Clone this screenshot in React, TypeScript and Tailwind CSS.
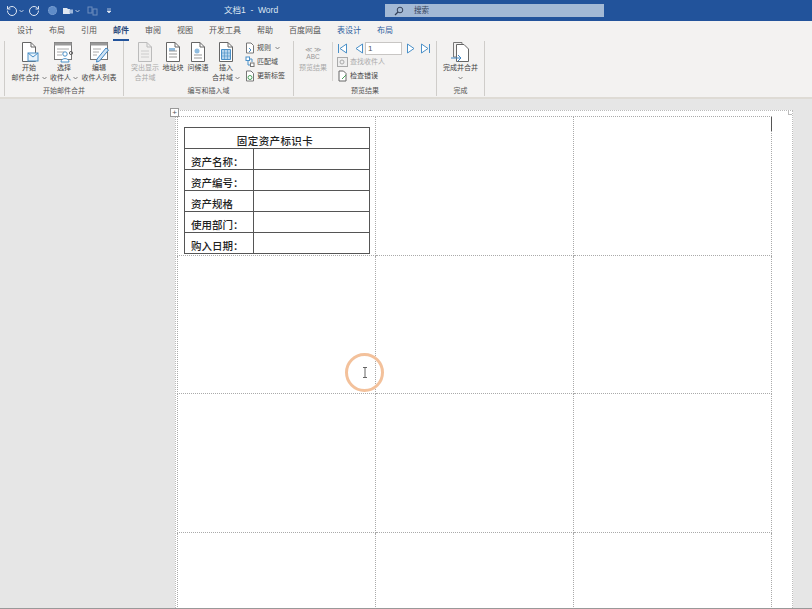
import React from "react";
import { RotateCcw, RotateCw } from "lucide-react";

const FONT = "font-['Liberation_Sans','Noto_Sans_CJK_SC',sans-serif]";

function Chevron({ className = "", color = "#666" }: { className?: string; color?: string }) {
  return (
    <svg width="5" height="4" viewBox="0 0 5 4" className={className}>
      <path d="M0.5 1 L2.5 3 L4.5 1" fill="none" stroke={color} strokeWidth="0.8" />
    </svg>
  );
}

// folded page used by most ribbon buttons
function Doc({
  stroke = "#666",
  fill = "#fff",
  children,
}: {
  stroke?: string;
  fill?: string;
  children?: React.ReactNode;
}) {
  return (
    <svg width="20" height="21" viewBox="0 0 20 21">
      <path d="M3.5 0.5 H12 L16.5 5 V19.5 H3.5 Z" fill={fill} stroke={stroke} />
      <path d="M12 0.5 V5 H16.5" fill="none" stroke={stroke} />
      {children}
    </svg>
  );
}

function BigButton({
  width,
  icon,
  lines,
  disabled,
}: {
  width: string;
  icon: React.ReactNode;
  lines: React.ReactNode[];
  disabled?: boolean;
}) {
  return (
    <div className={`flex flex-col items-center ${width} ${disabled ? "text-[#aaa]" : "text-[#444]"}`}>
      <div className="h-[21px] flex items-end justify-center">{icon}</div>
      {lines.map((line, i) => (
        <div key={i} className="h-[10px] leading-[10px] text-[7px] whitespace-nowrap flex items-center gap-[1px]">
          {line}
        </div>
      ))}
    </div>
  );
}

function Group({ width, label, children }: { width: string; label: string; children: React.ReactNode }) {
  return (
    <div className={`${width} h-[55px] border-r border-[#cfcdca] flex flex-col shrink-0`}>
      <div className="flex-1 flex items-start">{children}</div>
      <div className="h-[10px] leading-[10px] text-[7px] text-center text-[#555]">{label}</div>
    </div>
  );
}

function SmallRow({ icon, text, disabled }: { icon: React.ReactNode; text: React.ReactNode; disabled?: boolean }) {
  return (
    <div className={`h-[14px] flex items-center gap-[2px] text-[7px] whitespace-nowrap ${disabled ? "text-[#aaa]" : "text-[#444]"}`}>
      {icon}
      {text}
    </div>
  );
}

const lineDoc = <path d="M6 9 H14 M6 12 H14 M6 15 H14" stroke="#999" />;

function NavArrow({ dir, bar }: { dir: "l" | "r"; bar?: boolean }) {
  return (
    <svg width="11" height="11" viewBox="0 0 11 11">
      {dir === "l" ? (
        <>
          <path d="M9.5 1 L3 5.5 L9.5 10 Z" fill="#fff" stroke="#4a90c8" />
          {bar && <path d="M1.5 1 V10" stroke="#4a90c8" />}
        </>
      ) : (
        <>
          <path d="M1.5 1 L8 5.5 L1.5 10 Z" fill="#fff" stroke="#4a90c8" />
          {bar && <path d="M9.5 1 V10" stroke="#4a90c8" />}
        </>
      )}
    </svg>
  );
}

const TABS = ["设计", "布局", "引用", "邮件", "审阅", "视图", "开发工具", "帮助", "百度网盘", "表设计", "布局"];

function TitleBar() {
  return (
    <div className="h-[21px] bg-[#22539b] flex items-center text-[#dfe7f2] relative">
      <div className="w-[200px] pl-[6px] flex items-center shrink-0">
        <RotateCcw size={12} strokeWidth={2} />
        <Chevron className="ml-[1px]" color="#dfe7f2" />
        <RotateCw size={12} strokeWidth={2} className="ml-[4px]" />
        <span className="ml-[8px] w-[9px] h-[9px] rounded-full bg-[#5f8cc8] border border-dotted border-[#86a7d6]" />
        <svg width="12" height="9" viewBox="0 0 12 9" className="ml-[5px]">
          <path d="M1 2 H5 L6 3 H8 V8 H1 Z" fill="#dfe7f2" />
          <rect x="7.5" y="3.5" width="3.5" height="4" fill="#9db6da" />
        </svg>
        <Chevron className="ml-[1px]" color="#dfe7f2" />
        <svg width="11" height="10" viewBox="0 0 11 10" className="ml-[7px] opacity-40">
          <rect x="1" y="1" width="4" height="6" fill="none" stroke="#dfe7f2" />
          <rect x="6" y="3" width="4" height="6" fill="none" stroke="#dfe7f2" />
        </svg>
        <svg width="6" height="6" viewBox="0 0 6 6" className="ml-[8px]">
          <path d="M1 1 H5 M1 3 L3 5 L5 3 Z" fill="#dfe7f2" stroke="#dfe7f2" strokeWidth="0.7" />
        </svg>
      </div>
      <div className="w-[185px] shrink-0 pl-[24px] text-[8.5px] whitespace-pre">文档1  -  Word</div>
      <div className="w-[219px] h-[13px] bg-[#a3b9d5] flex items-center pl-[9px] gap-[10px] text-[#33415a] text-[7.5px]">
        <svg width="10" height="10" viewBox="0 0 10 10">
          <circle cx="6" cy="4" r="2.8" fill="none" stroke="#33415a" />
          <path d="M4 6 L1 9" stroke="#33415a" strokeWidth="1.2" />
        </svg>
        搜索
      </div>
    </div>
  );
}

function Tabs() {
  return (
    <div className="h-[20px] bg-[#f3f2f1] flex items-center pl-[17px] gap-[16px] text-[8px] text-[#555]">
      {TABS.map((t, i) => (
        <div
          key={i}
          className={`relative leading-[20px] h-[20px] ${i === 3 ? "font-bold text-[#2b4a7c] border-b-2 border-[#22539b]" : ""} ${i >= 9 ? "text-[#2f5f9f]" : ""}`}
        >
          {t}
        </div>
      ))}
    </div>
  );
}

function Ribbon() {
  return (
    <div className="h-[58px] bg-[#f3f2f1] flex items-start pl-[4px] border-b-[2px] border-[#dedbd5]">
      <div className="w-px h-[55px] bg-[#cfcdca]" />
      <Group width="w-[119px]" label="开始邮件合并">
        <div className="flex pl-[4px] pt-[1px]">
          <BigButton
            width="w-[40px]"
            icon={
              <Doc>
                <rect x="9" y="11" width="10" height="8" fill="#e8f2fa" stroke="#4a90c8" />
                <path d="M9 11 L14 15 L19 11" fill="none" stroke="#4a90c8" />
              </Doc>
            }
            lines={["开始", <>邮件合并<Chevron className="ml-[1px]" /></>]}
          />
          <BigButton
            width="w-[30px]"
            icon={
              <svg width="22" height="21" viewBox="0 0 22 21">
                <rect x="1.5" y="0.5" width="17" height="17" fill="#fff" stroke="#777" />
                <rect x="1.5" y="0.5" width="17" height="3" fill="#999" />
                <path d="M4 7 H16 M4 10 H11 M4 13 H9" stroke="#aaa" />
                <circle cx="12" cy="12" r="2.2" fill="#fff" stroke="#4a90c8" />
                <path d="M8 20 C8 15.5 16 15.5 16 20 Z" fill="#fff" stroke="#4a90c8" />
                <circle cx="18" cy="11" r="1.6" fill="none" stroke="#666" />
              </svg>
            }
            lines={["选择", <>收件人<Chevron className="ml-[1px]" /></>]}
          />
          <BigButton
            width="w-[40px]"
            icon={
              <svg width="22" height="21" viewBox="0 0 22 21">
                <rect x="2.5" y="0.5" width="17" height="17" fill="#fff" stroke="#777" />
                <rect x="2.5" y="0.5" width="17" height="3" fill="#999" />
                <path d="M5 7 H13 M5 10 H11 M5 13 H9" stroke="#aaa" />
                <path d="M9 17 L18 6 L20.5 8 L11.5 19 L8.5 20 Z" fill="#cfe3f4" stroke="#3f86c4" />
              </svg>
            }
            lines={["编辑", "收件人列表"]}
          />
        </div>
      </Group>
      <Group width="w-[170px]" label="编写和插入域">
        <div className="flex pl-[3px] pt-[1px]">
          <BigButton
            width="w-[36px]"
            disabled
            icon={<Doc stroke="#bbb" fill="#f0efee"><path d="M6 9 H14 M6 12 H14 M6 15 H14" stroke="#ccc" /></Doc>}
            lines={["突出显示", "合并域"]}
          />
          <BigButton
            width="w-[20px]"
            icon={<Doc><rect x="6" y="6" width="6" height="3" fill="#8fbce0" />{lineDoc}</Doc>}
            lines={["地址块"]}
          />
          <BigButton
            width="w-[30px]"
            icon={<Doc><circle cx="9" cy="9" r="2.5" fill="#8fbce0" /><path d="M6 13 H14 M6 16 H14" stroke="#999" /></Doc>}
            lines={["问候语"]}
          />
          <BigButton
            width="w-[26px]"
            icon={
              <Doc>
                <path d="M5.5 7.5 H14.5 V17.5 H5.5 Z" fill="#b4d3ec" stroke="#4a90c8" />
                <path d="M8.5 7.5 V17.5 M11.5 7.5 V17.5 M5.5 11 H14.5 M5.5 14 H14.5" stroke="#4a90c8" strokeWidth="0.6" />
              </Doc>
            }
            lines={["插入", <>合并域<Chevron className="ml-[1px]" /></>]}
          />
          <div className="flex flex-col ml-[6px] -mt-[1px]">
            <SmallRow
              icon={<svg width="10" height="12" viewBox="0 0 10 12"><path d="M1.5 1 H6 L8.5 3.5 V11 H1.5 Z" fill="#fff" stroke="#777" /><path d="M4 6 L6 8 L4 10" fill="none" stroke="#4a90c8" /></svg>}
              text={<>规则<Chevron className="ml-[2px]" /></>}
            />
            <SmallRow
              icon={<svg width="10" height="12" viewBox="0 0 10 12"><rect x="1" y="1" width="3.5" height="3.5" fill="#fff" stroke="#4a90c8" /><rect x="5.5" y="7" width="3.5" height="3.5" fill="#fff" stroke="#777" /><path d="M3 5 V9 H5 M7 6 V3 H5" fill="none" stroke="#4a90c8" /></svg>}
              text="匹配域"
            />
            <SmallRow
              icon={<svg width="10" height="12" viewBox="0 0 10 12"><path d="M1.5 1 H6 L8.5 3.5 V11 H1.5 Z" fill="#fff" stroke="#777" /><circle cx="5" cy="7.5" r="2" fill="none" stroke="#4aa35c" /></svg>}
              text="更新标签"
            />
          </div>
        </div>
      </Group>
      <Group width="w-[143px]" label="预览结果">
        <div className="flex pt-[1px]">
          <div className="w-[39px] h-[39px] border-r border-[#d6d4d1] mr-[4px]">
            <BigButton
              width="w-[38px]"
              disabled
              icon={
                <div className="text-[6.5px] leading-[7px] text-center text-[#999] font-['Liberation_Sans',sans-serif]">
                  <div>≪ ≫</div>
                  <div className="mb-[3px]">ABC</div>
                </div>
              }
              lines={["预览结果"]}
            />
          </div>
          <div className="flex flex-col -mt-[1px]">
            <div className="h-[14px] flex items-center">
              <NavArrow dir="l" bar />
              <span className="w-[5px]" />
              <NavArrow dir="l" />
              <div className="w-[37px] h-[13px] ml-[1px] mr-[4px] bg-white border border-[#c8c6c4] pl-[2px] text-[8px] leading-[11px] text-[#555]">1</div>
              <NavArrow dir="r" />
              <span className="w-[3px]" />
              <NavArrow dir="r" bar />
            </div>
            <SmallRow
              disabled
              icon={<svg width="11" height="10" viewBox="0 0 11 10"><rect x="0.5" y="0.5" width="10" height="9" fill="#eee" stroke="#aaa" /><circle cx="5" cy="5" r="2" fill="none" stroke="#aaa" /></svg>}
              text="查找收件人"
            />
            <SmallRow
              icon={<svg width="11" height="12" viewBox="0 0 11 12"><path d="M2 1 H6.5 L9 3.5 V11 H2 Z" fill="#fff" stroke="#666" /><path d="M5 9 L9 5" stroke="#4aa35c" /></svg>}
              text="检查错误"
            />
          </div>
        </div>
      </Group>
      <Group width="w-[48px]" label="完成">
        <div className="w-full pt-[1px]">
          <BigButton
            width="w-full"
            icon={
              <svg width="22" height="21" viewBox="0 0 22 21">
                <path d="M3.5 0.5 H12 V15 H3.5 Z" fill="#f3f2f1" stroke="#777" />
                <path d="M6.5 2.5 H14 L18.5 7 V19.5 H6.5 Z" fill="#fff" stroke="#666" />
                <path d="M1 16 H11 M8 13 L11 16 L8 19" fill="none" stroke="#3f86c4" />
              </svg>
            }
            lines={["完成并合并", <Chevron />]}
          />
        </div>
      </Group>
    </div>
  );
}

const CARD_ROWS = ["资产名称：", "资产编号：", "资产规格", "使用部门：", "购入日期："];

function AssetCard() {
  return (
    <table className="ml-[6px] mt-[10px] w-[186px] table-fixed border-collapse text-[10.5px] text-[#222] font-medium">
      <colgroup>
        <col className="w-[69px]" />
        <col />
      </colgroup>
      <tbody>
        <tr className="h-[21px]">
          <td colSpan={2} className="border border-[#555] text-center align-bottom leading-[14px] tracking-[0.4px] pr-[4px]">
            固定资产标识卡
          </td>
        </tr>
        {CARD_ROWS.map((row) => (
          <tr key={row} className="h-[21px]">
            <td className="border border-[#555] pl-[6px] align-bottom leading-[14px] whitespace-nowrap">{row}</td>
            <td className="border border-[#555]" />
          </tr>
        ))}
      </tbody>
    </table>
  );
}

function Page() {
  const cells = Array.from({ length: 12 });
  return (
    <div className="relative ml-[175px] w-[618px] h-[560px] bg-white border-l border-t border-r border-dotted border-[#bbb] pl-[1px] pt-[5px]">
      {/* table move handle */}
      <div className="absolute -left-[6px] -top-[3px] w-[9px] h-[9px] bg-white border border-[#999] flex items-center justify-center text-[8px] leading-none text-[#555]">
        +
      </div>
      {/* page corner */}
      <div className="absolute right-0 top-0 w-[4px] h-[4px] bg-white border-l border-b border-[#bbb]" />
      <div className="grid grid-cols-[199px_198px_198px] auto-rows-[138.5px] w-[595px] border-t border-dotted border-[#aaa]">
        {cells.map((_, i) => (
          <div
            key={i}
            className={`border-b border-r border-dotted border-[#aaa] ${i % 3 === 0 ? "border-l" : ""}`}
          >
            {i === 0 && <AssetCard />}
          </div>
        ))}
      </div>
      {/* caret in the first row */}
      <div className="absolute left-[595px] top-[6px] w-px h-[14px] bg-[#555]" />
      {/* click highlight around the mouse pointer */}
      <div className="absolute left-[169px] top-[242px] w-[39px] h-[39px] rounded-full border-[3px] border-[#f3c19b] flex items-center justify-center">
        <svg width="6" height="11" viewBox="0 0 6 11">
          <path d="M1 0.5 H5 M3 0.5 V10.5 M1 10.5 H5" stroke="#666" fill="none" />
        </svg>
      </div>
    </div>
  );
}

export default function App() {
  return (
    <div className={`w-[812px] h-[609px] overflow-hidden bg-[#e6e6e6] border-b border-[#999] ${FONT}`}>
      <TitleBar />
      <Tabs />
      <Ribbon />
      <div className="pt-[11px]">
        <Page />
      </div>
    </div>
  );
}
